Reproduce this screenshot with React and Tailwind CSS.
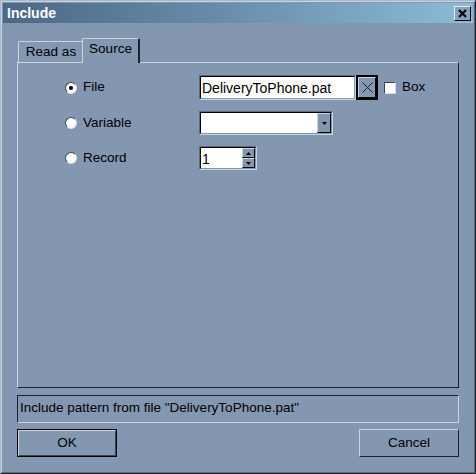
const font = { fontFamily: '"Liberation Sans", Arial, sans-serif' }

function Radio({ checked, label }) {
  return (
    <div className="flex items-center gap-[6px]">
      <span className="flex h-[12px] w-[12px] items-center justify-center rounded-full border border-t-[#3c4654] border-l-[#3c4654] border-r-[#d6dee8] border-b-[#d6dee8] bg-white">
        {checked && <span className="h-[4px] w-[4px] rounded-full bg-black" />}
      </span>
      <span className="text-[13.5px] text-black">{label}</span>
    </div>
  )
}

function Sunken({ className, children }) {
  return (
    <div className={`border border-t-[#5b6a7e] border-l-[#5b6a7e] border-r-[#c9d4e1] border-b-[#c9d4e1] ${className}`}>
      <div className="flex h-full w-full border border-t-black border-l-black border-r-[#8497b0] border-b-[#8497b0] bg-white">
        {children}
      </div>
    </div>
  )
}

function SmallBtn({ className, children }) {
  return (
    <div className={`flex items-center justify-center border border-t-[#c9d4e1] border-l-[#c9d4e1] border-r-black border-b-black bg-[#8497b0] ${className}`}>
      {children}
    </div>
  )
}

export default function App() {
  return (
    <div style={font} className="h-[474px] w-[476px] overflow-hidden bg-[#8497b0] select-none">
      <div className="flex h-full w-full flex-col border border-t-[#a9b8ca] border-l-[#a9b8ca] border-r-[#1c222b] border-b-[#1c222b]">
        <div className="flex h-full w-full flex-col border border-t-[#c9d4e1] border-l-[#c9d4e1] border-r-[#5b6a7e] border-b-[#5b6a7e] px-[15px]">
          {/* title bar */}
          <div className="-mx-[14px] mt-px flex h-[20px] items-center justify-between bg-gradient-to-r from-[#4b6886] via-[#6a90ad] to-[#8cbcd8] pl-[4px] pr-[2px]">
            <span className="text-[14px] font-bold text-white">Include</span>
            <div className="flex h-[15px] w-[17px] items-center justify-center border border-t-[#e4ebf2] border-l-[#e4ebf2] border-r-black border-b-black bg-[#8aa0b8]">
              <svg width="9" height="9" viewBox="0 0 9 9">
                <path d="M1 1 L8 8 M8 1 L1 8" stroke="black" strokeWidth="2.2" />
              </svg>
            </div>
          </div>

          {/* tabs */}
          <div className="mt-[15px] flex items-end pl-px">
            <div className="-mr-[2px] flex h-[21px] w-[66px] items-center justify-center rounded-t-[2px] border border-b-0 border-t-[#c9d4e1] border-l-[#c9d4e1] border-r-[#3c4654] text-[13.5px]">
              Read as
            </div>
            <div className="relative z-10 -mb-px flex h-[25px] w-[58px] items-center justify-center rounded-t-[2px] border-l border-t border-r-2 border-t-[#c9d4e1] border-l-[#c9d4e1] border-r-[#1c222b] bg-[#8497b0] pb-[3px] text-[13.5px]">
              Source
            </div>
          </div>

          {/* panel */}
          <div className="flex h-[326px] flex-col border border-t-[#c9d4e1] border-l-[#c9d4e1] border-r-[#1c222b] border-b-[#1c222b] pl-[47px] pt-[12px]">
            <div className="grid grid-cols-[134px_auto] gap-y-[11px]">
              <div className="flex h-[25px] items-center">
                <Radio checked label="File" />
              </div>
              <div className="flex h-[25px] items-center">
                <Sunken className="h-[25px] w-[157px]">
                  <span className="px-[1px] pt-[2px] text-[14px] leading-[18px]">DeliveryToPhone.pat</span>
                </Sunken>
                <div className="h-[25px] border-2 border-black">
                  <SmallBtn className="h-full w-[18px]">
                    <svg width="11" height="11" viewBox="0 0 11 11">
                      <path d="M0.5 0.5 L10.5 10.5 M10.5 0.5 L0.5 10.5" stroke="#1c222b" strokeWidth="1" />
                    </svg>
                  </SmallBtn>
                </div>
                <span className="ml-[6px] h-[12px] w-[12px] border border-t-[#3c4654] border-l-[#3c4654] border-r-[#d6dee8] border-b-[#d6dee8] bg-white" />
                <span className="ml-[6px] text-[13.5px]">Box</span>
              </div>

              <div className="flex h-[24px] items-center">
                <Radio label="Variable" />
              </div>
              <div className="flex h-[24px] items-center">
                <Sunken className="h-[24px] w-[134px]">
                  <div className="flex-1" />
                  <SmallBtn className="h-full w-[14px]">
                    <svg width="5" height="3" viewBox="0 0 5 3">
                      <path d="M0 0 H5 L2.5 3 Z" fill="black" />
                    </svg>
                  </SmallBtn>
                </Sunken>
              </div>

              <div className="flex h-[24px] items-center">
                <Radio label="Record" />
              </div>
              <div className="flex h-[24px] items-center">
                <Sunken className="h-[24px] w-[58px]">
                  <span className="flex-1 pl-[1px] pt-[2px] text-[14px] leading-[18px]">1</span>
                  <div className="flex flex-col">
                    <SmallBtn className="h-[11px] w-[13px]">
                      <svg width="5" height="3" viewBox="0 0 5 3">
                        <path d="M0 3 H5 L2.5 0 Z" fill="black" />
                      </svg>
                    </SmallBtn>
                    <SmallBtn className="h-[11px] w-[13px]">
                      <svg width="5" height="3" viewBox="0 0 5 3">
                        <path d="M0 0 H5 L2.5 3 Z" fill="black" />
                      </svg>
                    </SmallBtn>
                  </div>
                </Sunken>
              </div>
            </div>
          </div>

          {/* status */}
          <div className="mt-[7px] flex h-[28px] items-start border border-t-[#1c222b] border-l-[#1c222b] border-r-[#c9d4e1] border-b-[#c9d4e1] px-[2px] pt-[5px] text-[13.5px] leading-none">
            Include pattern from file "DeliveryToPhone.pat"
          </div>

          {/* buttons */}
          <div className="mt-[6px] flex justify-between">
            <div className="h-[28px] w-[100px] border border-black">
              <div className="flex h-full w-full items-center justify-center border border-t-[#c9d4e1] border-l-[#c9d4e1] border-r-[#3c4654] border-b-[#3c4654] text-[13.5px]">
                OK
              </div>
            </div>
            <div className="flex h-[28px] w-[100px] items-center justify-center border border-t-[#c9d4e1] border-l-[#c9d4e1] border-r-[#1c222b] border-b-[#1c222b] text-[13.5px]">
              Cancel
            </div>
          </div>
        </div>
      </div>
    </div>
  )
}
